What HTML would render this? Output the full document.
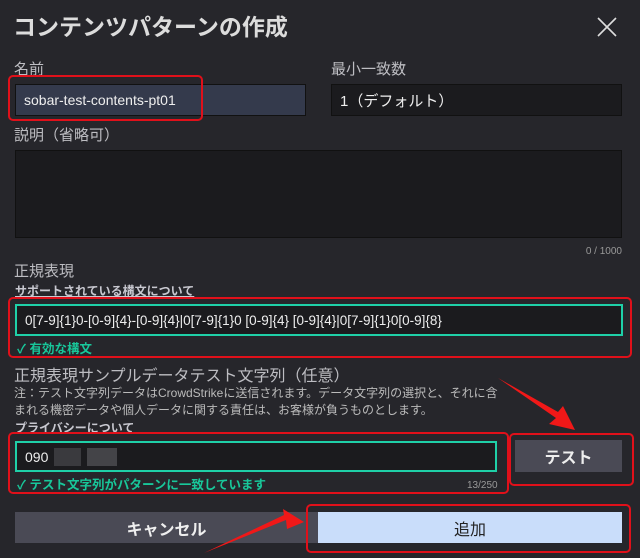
<!DOCTYPE html>
<html><head><meta charset="utf-8"><style>
body{margin:0;width:640px;height:558px;background:#26262b;position:relative;overflow:hidden;font-family:"Liberation Sans","Noto Sans CJK JP",sans-serif;color:#c8c8cc}
.a{position:absolute;white-space:nowrap}
.lbl{font-size:15px;color:#bdbdc2}
.inp{position:absolute;box-sizing:border-box;background:#1b1b1e;border:1px solid #111;font-size:14px;color:#eee;padding-left:8px;display:flex;align-items:center}
.red{position:absolute;border:2px solid #e0101a;border-radius:5px;box-sizing:border-box}
.lnk{font-size:12px;color:#c8c8d0;text-decoration:underline;font-weight:bold}
.ok{font-size:12.5px;color:#18c79a;font-weight:bold}
.btn{position:absolute;display:flex;align-items:center;justify-content:center;font-size:16px;font-weight:bold}
</style></head><body>
<div class="a" style="left:13px;top:8px;font-size:23px;font-weight:bold;color:#dcdcdc">コンテンツパターンの作成</div>
<svg class="a" style="left:596px;top:16px" width="22" height="22"><path d="M2 2L20 20M20 2L2 20" stroke="#ddd" stroke-width="1.6"/></svg>
<div class="a lbl" style="left:14px;top:58px">名前</div>
<div class="a lbl" style="left:331px;top:58px">最小一致数</div>
<div class="inp" style="left:15px;top:84px;width:291px;height:32px;background:#343a4c">sobar-test-contents-pt01</div>
<div class="red" style="left:8px;top:75px;width:195px;height:46px"></div>
<div class="inp" style="left:331px;top:84px;width:291px;height:32px;font-size:15px">1（デフォルト）</div>
<div class="a lbl" style="left:14px;top:124px">説明（省略可）</div>
<div class="inp" style="left:15px;top:150px;width:607px;height:88px"></div>
<div class="a" style="right:18px;top:246px;font-size:10px;color:#999">0 / 1000</div>
<div class="a lbl" style="left:14px;top:260px">正規表現</div>
<div class="a lnk" style="left:15px;top:282px">サポートされている構文について</div>
<div class="inp" style="left:15px;top:304px;width:608px;height:32px;border:2px solid #1fd0a8;font-size:13.5px">0[7-9]{1}0-[0-9]{4}-[0-9]{4}|0[7-9]{1}0 [0-9]{4} [0-9]{4}|0[7-9]{1}0[0-9]{8}</div>
<div class="a ok" style="left:17px;top:338px">✓ 有効な構文</div>
<div class="red" style="left:8px;top:297px;width:624px;height:61px"></div>
<div class="a" style="left:14px;top:362px;font-size:16px;color:#bdbdc2">正規表現サンプルデータテスト文字列（任意）</div>
<div class="a" style="left:14px;top:385px;font-size:12px;color:#bbb;line-height:17px">注：テスト文字列データはCrowdStrikeに送信されます。データ文字列の選択と、それに含<br>まれる機密データや個人データに関する責任は、お客様が負うものとします。</div>
<div class="a lnk" style="left:15px;top:419px">プライバシーについて</div>
<div class="inp" style="left:15px;top:441px;width:482px;height:31px;border:2px solid #1fd0a8">090<span style="display:inline-block;width:27px;height:18px;background:#3a3a3e;margin-left:6px"></span><span style="display:inline-block;width:30px;height:18px;background:#444448;margin-left:6px"></span></div>
<div class="a ok" style="left:17px;top:474px">✓ テスト文字列がパターンに一致しています</div>
<div class="a" style="left:467px;top:480px;font-size:10px;color:#999">13/250</div>
<div class="red" style="left:8px;top:432px;width:501px;height:62px"></div>
<div class="btn" style="left:515px;top:440px;width:107px;height:32px;background:#4a4a55;color:#eee">テスト</div>
<div class="red" style="left:509px;top:433px;width:125px;height:53px"></div>
<div class="btn" style="left:15px;top:512px;width:303px;height:31px;background:#4a4a55;color:#eee">キャンセル</div>
<div class="btn" style="left:318px;top:512px;width:304px;height:31px;background:#c9ddfa;color:#222;font-weight:normal">追加</div>
<div class="red" style="left:306px;top:504px;width:325px;height:49px"></div>
<svg class="a" style="left:0;top:0" width="640" height="558">
<path d="M498 378L556 418L549 424L575 430L563 406L558 412Z" fill="#f01818"/>
<path d="M204 553L286 520L287 529L304 522L283 509L284 515Z" fill="#f01818"/>
</svg>
</body></html>
